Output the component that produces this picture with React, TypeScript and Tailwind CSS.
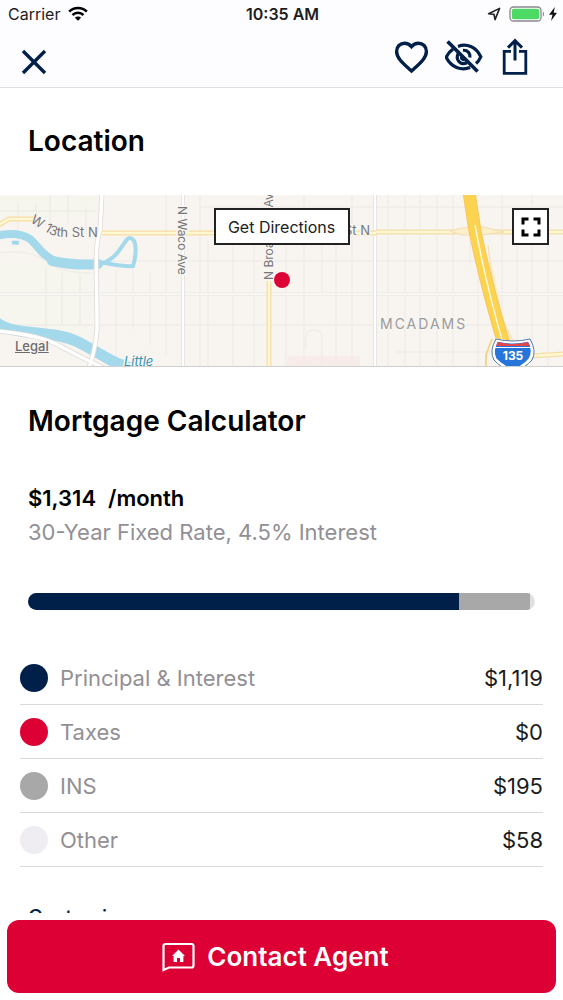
import { X } from "lucide-react";

const costs = [
  { label: "Principal & Interest", amount: 1119, dot: "bg-[#00204a]" },
  { label: "Taxes", amount: 0, dot: "bg-[#dd0034]" },
  { label: "INS", amount: 195, dot: "bg-[#a9a8a9]" },
  { label: "Other", amount: 58, dot: "bg-[#efedf1]" },
];

function StatusBar() {
  return (
    <div className="grid grid-cols-3 items-center h-7 pl-2 pr-1.5 text-base text-[#1c1c1e]">
      <div className="flex items-center gap-2">
        <span>Carrier</span>
        <svg className="w-5 h-4" viewBox="0 0 20 16" fill="none" stroke="#000" aria-hidden="true">
          <path d="M1.2 5.6a12.5 12.5 0 0 1 17.6 0" strokeWidth="2.7" />
          <path d="M4.5 9a7.8 7.8 0 0 1 11 0" strokeWidth="2.5" />
          <path d="M10 14.8 6.9 11.7a4.4 4.4 0 0 1 6.2 0z" fill="#000" stroke="none" />
        </svg>
      </div>
      <span className="text-center font-semibold">10:35 AM</span>
      <div className="flex items-center justify-end gap-1">
        <svg className="w-3.5 h-3.5 mr-1" viewBox="0 0 14 14" fill="none" stroke="#222" strokeWidth="1.6" aria-hidden="true">
          <path d="M1.6 6.8 12.6 1.4 8 12.6 7 7.4z" strokeLinejoin="round" />
        </svg>
        <svg className="w-9 h-4" viewBox="0 0 36 16" aria-hidden="true">
          <rect x="1" y="1" width="31" height="14" rx="3.5" fill="#fff" stroke="#8b8790" strokeWidth="1.3" />
          <rect x="2.8" y="2.8" width="27.4" height="10.4" rx="2" fill="#4cd964" />
          <path d="M33.8 5.4c1.6.6 1.6 4.6 0 5.2z" fill="#8b8790" />
        </svg>
        <svg className="w-2 h-3.5" viewBox="0 0 8 14" aria-hidden="true">
          <path d="M5.8 0 0 7.8h3.5L2 14l6-8.2H4.7z" fill="#111" />
        </svg>
      </div>
    </div>
  );
}

function NavBar() {
  return (
    <nav className="flex items-start justify-between h-[60px] pl-3 pr-[34px] pt-2 text-[#00204a] border-b border-[#dedde0]">
      <button type="button" aria-label="Close" className="mt-1">
        <X className="w-11 h-11" strokeWidth={1.8} strokeLinecap="butt" />
      </button>
      <div className="flex gap-4">
        <button type="button" aria-label="Save">
          <svg className="w-9 h-10" viewBox="0 0 36 40" fill="none" stroke="currentColor" strokeWidth="3.4" aria-hidden="true">
            <path d="M18.500 35 16.2 33C9 26.400 3.600 21.500 3.600 15.400 3.600 10.600 7 7.200 11.600 7.200c2.700 0 5.200 1.300 6.900 3.400 1.700-2.100 4.200-3.400 6.900-3.400 4.600 0 8 3.400 8 8.200 0 6.100-5.400 11-12.600 17.600z" />
          </svg>
        </button>
        <button type="button" aria-label="Hide">
          <svg className="w-10 h-10" viewBox="0 0 40 40" fill="none" stroke="currentColor" strokeWidth="3.2" aria-hidden="true">
            <path d="M13 10.4C21.500 7.200 31 10.600 35.800 20.800c-1.300 2.800-2.900 5-4.800 6.700" />
            <path d="M8 13.2C5.100 15.100 2.900 17.700 1.200 21.200 6.200 31.400 16 34.800 25.200 31.600" />
            <path d="M13.200 17.400c-3.200 6.200 2.500 12.400 8.600 9.400" />
            <path d="M18 14.300c4.400-.4 7.500 3 6.900 7.100" />
            <path d="M16.100 20.600c0 2 1.200 3.400 3.400 3.400" strokeWidth="2.6" />
            <path d="M2.600 5.600 32.600 35.600" strokeWidth="3.6" />
          </svg>
        </button>
        <button type="button" aria-label="Share">
          <svg className="w-7 h-10" viewBox="0 0 28 40" fill="none" stroke="currentColor" strokeWidth="2.8" aria-hidden="true">
            <path d="M10 15.4H3.2V37.4H24.8V15.4H18" />
            <path d="M14 24.5V5M7 11.6 14 4.6 21 11.6" strokeWidth="3" />
          </svg>
        </button>
      </div>
    </nav>
  );
}

function StreetMap() {
  return (
    <svg
      className="block w-full h-[171px]"
      viewBox="0 0 563 171"
      preserveAspectRatio="xMidYMid slice"
      fill="none"
      role="img"
      aria-label="Street map"
    >
      <rect width="563" height="171" fill="#f8f5f1" />
      <path d="M0 24H95V0H0zM0 68H90V140H0z" fill="#f6f5ee" />
      <path d="M288 161H360V171H286z" fill="#f7ecea" />

      {/* side streets */}
      <g stroke="#efece9" strokeWidth="1.5">
        <path d="M103 66H180M0 130H180M183 66H563M183 130H563M200 12H563M395 157H500" />
        <path d="M18 8V45M36 8V34M50 0V30M68 0V30M86 12V40M0 16H95M46 72V134M62 78V130M80 80V130M116 76V171M133 60V134M150 78V150M166 0V160" />
        <path d="M200 0V171M208 45V171M233 45V171M254 12V171M286 45V171M304 0V171M322 12V99M336 45V171M352 0V171M388 0V171M405 0V171M420 0V171M437 0V171M453 0V171M470 0V70M478 60V171M502 0V171M517 45V171M532 0V171M548 45V171" />
        <path d="M306 152V142q0-7 8-7t8 7V171M0 58Q30 54 46 66T90 78" />
      </g>
      <path d="M0 99H563" stroke="#e8e5e2" strokeWidth="3" />
      <path d="M0 99H563" stroke="#fcfbf9" strokeWidth="1.5" />
      <path d="M183 0V171M375 0V171" stroke="#dfdcda" strokeWidth="4" />
      <path d="M183 0V171M375 0V171" stroke="#fff" strokeWidth="2.5" />

      {/* river */}
      <g stroke="#a4d9ec" strokeLinecap="round">
        <path d="M-4 41Q18 36 30 44C44 56 44 74 98 69" strokeWidth="8" />
        <path d="M52 66Q76 71 98 69" strokeWidth="10" />
        <path d="M98 69C120 66 124 42 130 43 138 44 136 62 133 71 122 72 112 69 99 67" strokeWidth="4" />
        <path d="M12 48Q15 47 19 48" strokeWidth="4" strokeLinecap="butt" />
        <path d="M-4 127C14 142 52 134 78 147S110 168 136 174" strokeWidth="11" />
      </g>

      {/* main roads */}
      <path d="M-3 136Q40 140 60 151T104 173M102 -3 100 36C94 52 97 74 97 134Q96 152 89 173" stroke="#dedbd8" strokeWidth="5" />
      <path d="M-3 136Q40 140 60 151T104 173M102 -3 100 36C94 52 97 74 97 134Q96 152 89 173" stroke="#fff" strokeWidth="3.5" />
      <path d="M-3 31 9 24H34M102 38H376M376 37H563M269 86V171M565 159 530 161" stroke="#f6dda4" strokeWidth="5" />
      <path d="M-3 31 9 24H34M102 38H376M376 37H563M269 86V171M565 159 530 161" stroke="#fff8d2" strokeWidth="2.5" />

      {/* interstate */}
      <path d="M450 36Q462 32 474 32H484Q498 36 504 37L480 40H462zM488 50Q494 118 516 150L524 163H512" fill="#fcf0c8" stroke="#f6dcb4" />
      <path d="M469 -3 475 36Q487 94 506 156" stroke="#f8c560" strokeWidth="13" />
      <path d="M469 -3 475 36Q487 94 506 156" stroke="#fcd34f" strokeWidth="11" />
      <path d="M475 30Q486 90 503 148" stroke="#fff8df" strokeWidth="1.5" />
      <path d="M492 144 486 160V171" stroke="#f4d58c" strokeWidth="2" />

      <g fill="#77757a" stroke="#f7f5f0" strokeWidth="3" paintOrder="stroke" fontSize="13">
        <path id="thirteenth" d="M30 27 49 38.5Q55 42 66 42H120" stroke="none" fill="none" />
        <text stroke="none">
          <textPath href="#thirteenth">W 13th St N</textPath>
        </text>
        <text x="344" y="40">St N</text>
        <text transform="translate(178 11) rotate(90)" fontSize="12">N Waco Ave</text>
        <text transform="translate(273 85) rotate(-90)" fontSize="12">N Broadway Ave</text>
        <text x="380" y="134" fontSize="14" letterSpacing="2" fill="#9d9a9c">MCADAMS</text>
        <text x="124" y="171" fontStyle="italic" fill="#3a92b5">Little</text>
      </g>

      {/* I-135 shield */}
      <path d="M497 145Q513 149 529 145 535 156 530 164 525 171 513 176 501 171 495 164 491 156 497 145z" fill="#2675db" stroke="#fff" strokeWidth="3" />
      <path d="M496 144Q513 148 530 144 537 156 532 165 526 172 513 178 500 172 494 165 489 156 496 144z" stroke="#5479a8" />
      <path d="M498 147Q513 151 528 147L530 151H496z" fill="#e4474b" />
      <path d="M495 152.5H531" stroke="#fff" strokeWidth="1.2" />
      <text x="513" y="165" textAnchor="middle" fontSize="12" fontWeight="700" fill="#fff">135</text>
    </svg>
  );
}

function LocationSection() {
  return (
    <section>
      <h2 className="px-7 pt-[35px] pb-9 text-[28px] leading-9 font-semibold">Location</h2>
      <div className="relative border-b border-[#cfced1] overflow-hidden">
        <StreetMap />
        <button
          type="button"
          className="absolute top-[13px] left-1/2 -translate-x-1/2 h-[37px] w-[136px] border-2 border-[#222] bg-white text-base whitespace-nowrap text-[#222]"
        >
          Get Directions
        </button>
        <button
          type="button"
          aria-label="Full screen"
          className="absolute top-[13px] right-3.5 flex items-center justify-center w-[37px] h-[37px] border-2 border-[#222] bg-white"
        >
          <svg className="w-5 h-5" viewBox="0 0 20 20" fill="none" stroke="#000" strokeWidth="3" aria-hidden="true">
            <path d="M2 7.5V2H7.5M12.5 2H18V7.5M18 12.5V18H12.5M7.5 18H2V12.5" />
          </svg>
        </button>
        <span className="absolute top-[77px] left-1/2 -translate-x-1/2 w-4 h-4 rounded-full bg-[#dd0034]" />
        <a href="#legal" className="absolute left-[15px] bottom-3 text-[13px] leading-4 font-medium text-[#6e6c70] underline">
          Legal
        </a>
      </div>
    </section>
  );
}

function MortgageCalculator() {
  return (
    <section>
      <h2 className="px-7 pt-9 text-[28px] leading-9 font-semibold">Mortgage Calculator</h2>
      <div className="px-7 pt-[42px]">
        <p className="flex gap-3 text-[22px] leading-[34px] font-semibold">
          <span>$1,314</span>
          <span>/month</span>
        </p>
        <p className="text-[22px] leading-[34px] text-[#929094]">30-Year Fixed Rate, 4.5% Interest</p>
        <div className="flex h-[17px] mt-11 rounded-full overflow-hidden bg-[#e1dfe2]">
          <div className="w-[85%] bg-[#00204a]" />
          <div className="w-[14%] bg-[#a9a8a9]" />
        </div>
      </div>
      <dl className="px-5 pt-[41px] text-[22px] leading-8">
        {costs.map((cost) => (
          <div key={cost.label} className="flex items-center h-[54px] border-b border-[#d9d8da]">
            <dt className="flex flex-1 items-center gap-3 text-[#929094]">
              <span className={`w-7 h-7 rounded-full ${cost.dot}`} />
              {cost.label}
            </dt>
            <dd className="text-[#1c1c1e]">${cost.amount.toLocaleString("en-US")}</dd>
          </div>
        ))}
      </dl>
      <a href="#customize" className="block px-7 pt-[34px] text-xl leading-8 font-medium text-[#00204a]">
        Customize
      </a>
    </section>
  );
}

export default function App() {
  return (
    <div className="flex flex-col h-screen bg-white text-black font-['Inter',sans-serif] overflow-hidden">
      <header className="bg-[#fdfcfe]">
        <StatusBar />
        <NavBar />
      </header>
      <main className="flex-1 min-h-0 overflow-hidden">
        <LocationSection />
        <MortgageCalculator />
      </main>
      <footer className="px-[7px] py-[7px]">
        <button
          type="button"
          className="flex items-center justify-center gap-3 w-full h-[73px] pr-3 rounded-xl bg-[#dd0034] text-[26px] font-semibold text-white"
        >
          <svg className="w-[33px] h-[30px]" viewBox="0 0 33 30" fill="none" stroke="#fff" strokeWidth="2.2" aria-hidden="true">
            <path d="M1.5 28V4Q1.500 2 3.500 2H29.500Q31.500 2 31.500 4V23.500Q31.500 25.500 29.500 25.500H7z" />
            <path d="M16.5 7.500 23 14H21.400V20H18V16H15V20H11.600V14H10z" fill="#fff" stroke="none" />
          </svg>
          Contact Agent
        </button>
      </footer>
    </div>
  );
}
